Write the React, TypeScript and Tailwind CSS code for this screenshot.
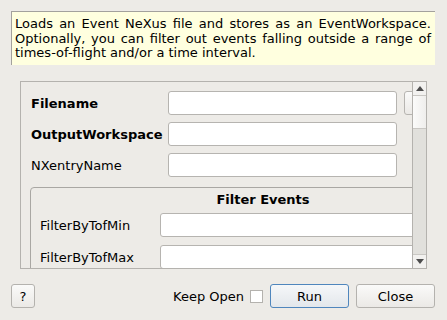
import React from "react";

function Input({ className = "" }: { className?: string }) {
  return (
    <div
      className={
        "h-[24px] shrink-0 rounded-[3px] border border-[#b6b4b0] bg-white " + className
      }
    />
  );
}

function Row({ label, bold }: { label: string; bold?: boolean }) {
  return (
    <div className="flex h-[24px] items-center">
      <div className={"w-[137px] shrink-0 " + (bold ? "font-bold" : "")}>{label}</div>
      <Input className="w-[229px]" />
      {label === "Filename" ? (
        <div className="ml-[7px] h-[24px] w-[90px] shrink-0 rounded-[3px] border border-[#b6b4b0] bg-gradient-to-b from-[#fafaf9] to-[#ebe9e6]" />
      ) : null}
    </div>
  );
}

function GroupRow({ label }: { label: string }) {
  return (
    <div className="flex h-[24px] items-center">
      <div className="w-[120px] shrink-0">{label}</div>
      <Input className="w-[296px]" />
    </div>
  );
}

export default function App() {
  return (
    <div className="relative h-[320px] w-[447px] overflow-hidden bg-[#edebe7] font-['DejaVu_Sans',sans-serif] text-[13px] leading-[15px] text-black">
      <div className="ml-[11px] mt-[11px] h-[54px] w-[424px] border-l border-t border-[#a3a19d] bg-[#ffffdf] pl-[3px] pr-[4px] pt-[5px] text-justify leading-[14.5px]">
        Loads an Event NeXus file and stores as an EventWorkspace. Optionally, you can filter out events falling outside a range of times-of-flight and/or a time interval.
      </div>

      <div className="ml-[20px] mt-[16px] flex h-[188px] w-[407px] border border-[#b4b2ae]">
        <div className="relative flex-1 overflow-hidden">
          <div className="w-[500px] pt-[9px]">
            <div className="flex flex-col gap-[7px] pl-[10px]">
              <Row label="Filename" bold />
              <Row label="OutputWorkspace" bold />
              <Row label="NXentryName" />
            </div>
            <div className="ml-[9px] mt-[10px] h-[120px] w-[466px] rounded-[4px] border border-[#a9a7a3]">
              <div className="pt-[4px] text-center font-bold">Filter Events</div>
              <div className="mt-[6px] flex flex-col gap-[8px] pl-[9px]">
                <GroupRow label="FilterByTofMin" />
                <GroupRow label="FilterByTofMax" />
              </div>
            </div>
          </div>
        </div>
        <div className="flex w-[14px] shrink-0 flex-col border-l border-[#b4b2ae] bg-[#e1e0dc]">
          <div className="flex h-[14px] shrink-0 items-center justify-center border-b border-[#c9c7c3] bg-[#f2f1ef]">
            <svg width="8" height="5" viewBox="0 0 8 5">
              <polygon points="0,5 8,5 4,0" fill="#4d4d4d" />
            </svg>
          </div>
          <div className="h-[33px] shrink-0 border-b border-[#c9c7c3] bg-gradient-to-r from-[#fbfbfa] to-[#efeeec]" />
          <div className="flex-1" />
          <div className="flex h-[14px] shrink-0 items-center justify-center border-t border-[#c9c7c3] bg-[#f2f1ef]">
            <svg width="8" height="5" viewBox="0 0 8 5">
              <polygon points="0,0 8,0 4,5" fill="#4d4d4d" />
            </svg>
          </div>
        </div>
      </div>

      <div className="mt-[15px] flex h-[24px] items-center pl-[11px] pr-[12px]">
        <div className="flex h-[24px] w-[24px] items-center justify-center rounded-[3px] border border-[#b4b2ae] bg-gradient-to-b from-[#fafaf9] to-[#ebe9e6]">
          ?
        </div>
        <div className="flex-1" />
        <div>Keep Open</div>
        <div className="ml-[6px] h-[13px] w-[13px] border border-[#b4b2ae] bg-white" />
        <div className="ml-[7px] flex h-[24px] w-[79px] items-center justify-center rounded-[3px] border border-[#4f86bd] bg-gradient-to-b from-[#f5f7f9] to-[#e3e7eb]">
          Run
        </div>
        <div className="ml-[7px] flex h-[24px] w-[79px] items-center justify-center rounded-[3px] border border-[#b4b2ae] bg-gradient-to-b from-[#fafaf9] to-[#ebe9e6]">
          Close
        </div>
      </div>
    </div>
  );
}
